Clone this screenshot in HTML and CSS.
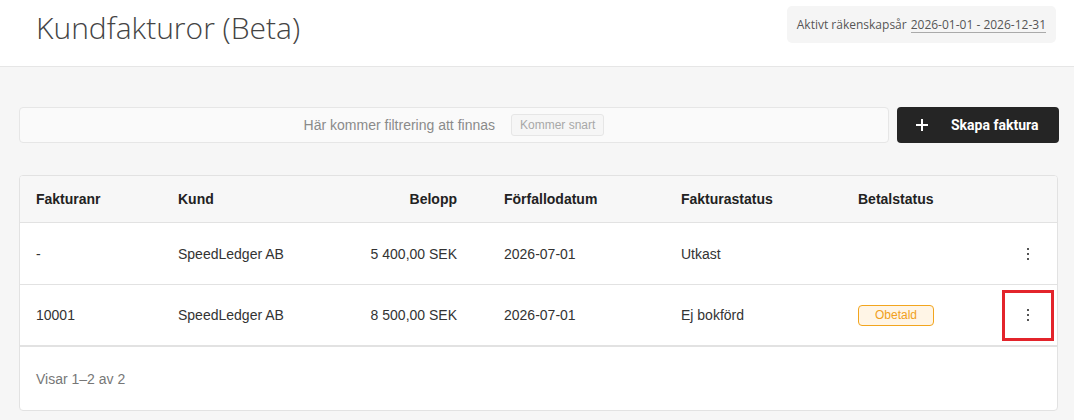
FILE: index.html
```html
<!DOCTYPE html>
<html lang="sv">
<head>
<meta charset="UTF-8">
<meta name="viewport" content="width=device-width, initial-scale=1.0">
<title>Kundfakturor (Beta)</title>
<link rel="stylesheet" href="styles.css">
</head>
<body>
  <header class="topbar">
    <h1>Kundfakturor (Beta)</h1>
    <div class="fiscal-year">Aktivt räkenskapsår <span class="fiscal-dates">2026-01-01 - 2026-12-31</span></div>
  </header>

  <main class="content">
    <div class="toolbar">
      <div class="filter-bar">
        <span class="filter-text">Här kommer filtrering att finnas</span>
        <span class="soon-tag">Kommer snart</span>
      </div>
      <button class="create-btn">
        <svg width="12" height="12" viewBox="0 0 12 12"><path d="M6 0v12M0 6h12" stroke="#fff" stroke-width="2"/></svg>
        <span>Skapa faktura</span>
      </button>
    </div>

    <div class="card">
      <table class="invoices">
        <colgroup>
          <col style="width: 142px">
          <col style="width: 168px">
          <col style="width: 158px">
          <col style="width: 177px">
          <col style="width: 177px">
          <col style="width: 158px">
          <col>
        </colgroup>
        <thead>
          <tr>
            <th>Fakturanr</th>
            <th>Kund</th>
            <th class="amount">Belopp</th>
            <th>Förfallodatum</th>
            <th>Fakturastatus</th>
            <th>Betalstatus</th>
            <th></th>
          </tr>
        </thead>
        <tbody>
          <tr>
            <td>-</td>
            <td>SpeedLedger AB</td>
            <td class="amount">5 400,00 SEK</td>
            <td>2026-07-01</td>
            <td>Utkast</td>
            <td></td>
            <td class="actions"><button class="menu-btn"><i></i><i></i><i></i></button></td>
          </tr>
          <tr class="last-row">
            <td>10001</td>
            <td>SpeedLedger AB</td>
            <td class="amount">8 500,00 SEK</td>
            <td>2026-07-01</td>
            <td>Ej bokförd</td>
            <td><span class="pay-badge">Obetald</span></td>
            <td class="actions"><button class="menu-btn marked"><i></i><i></i><i></i></button></td>
          </tr>
        </tbody>
      </table>
      <div class="card-footer">Visar 1–2 av 2</div>
    </div>
  </main>
</body>
</html>
```

FILE: styles.css
```css
body {
  margin: 0;
  background-color: #f6f6f6;
  font-family: "Liberation Sans", Arial, sans-serif;
  color: #333333;
}
.topbar {
  background-color: #ffffff;
  border-bottom: 1px solid #e6e6e6;
  height: 66px;
  display: flex;
  justify-content: space-between;
  align-items: flex-start;
  padding: 0 18px 0 36px;
}
.topbar h1 {
  margin: 7px 0 0;
  font-family: "Open Sans", sans-serif;
  font-weight: 300;
  font-size: 30px;
  color: #444444;
}
.fiscal-year {
  margin-top: 6px;
  background-color: #f5f5f5;
  border-radius: 5px;
  padding: 0 10px;
  height: 37px;
  display: flex;
  align-items: center;
  gap: 4px;
  font-family: "Open Sans", sans-serif;
  font-size: 12px;
  color: #555555;
}
.fiscal-dates {
  border-bottom: 1px solid #aaaaaa;
  line-height: 15px;
}
.content {
  padding: 40px 15px 0 19px;
}
.toolbar {
  display: flex;
  gap: 8px;
  height: 36px;
}
.filter-bar {
  flex: 1;
  background-color: #fafafa;
  border: 1px solid #e6e6e6;
  border-radius: 4px;
  display: flex;
  justify-content: center;
  align-items: center;
  gap: 16px;
}
.filter-text {
  font-size: 14px;
  color: #8a8a8a;
}
.soon-tag {
  font-size: 12px;
  color: #a8a8a8;
  background-color: #f6f6f6;
  border: 1px solid #e6e6e6;
  border-radius: 3px;
  padding: 3px 8px;
}
.create-btn {
  width: 162px;
  background-color: #252525;
  color: #ffffff;
  border: none;
  border-radius: 4px;
  display: flex;
  align-items: center;
  gap: 23px;
  padding: 0 0 0 19px;
  font-family: Roboto, sans-serif;
  font-weight: 700;
  font-size: 14px;
  cursor: pointer;
}
.card {
  margin: 32px 1px 0 0;
  background-color: #ffffff;
  border: 1px solid #e2e2e2;
  border-radius: 4px;
  overflow: hidden;
}
.invoices {
  width: 100%;
  border-collapse: collapse;
  table-layout: fixed;
  font-size: 14px;
}
.invoices th {
  background-color: #f7f7f7;
  color: #222222;
  font-weight: 700;
  text-align: left;
  height: 46px;
  padding: 0 16px;
  border-bottom: 1px solid #e2e2e2;
}
.invoices td {
  height: 61px;
  padding: 0 16px;
  border-bottom: 1px solid #e2e2e2;
}
.invoices .last-row td {
  height: 60px;
  border-bottom: 2px solid #e2e2e2;
}
.invoices .amount {
  text-align: right;
  padding-right: 31px;
}
.invoices .actions {
  padding: 0;
}
.pay-badge {
  display: inline-block;
  width: 74px;
  text-align: center;
  font-size: 12px;
  line-height: 19px;
  color: #f0a020;
  background-color: #fff5e6;
  border: 1px solid #f2a51e;
  border-radius: 4px;
}
.menu-btn {
  display: flex;
  flex-direction: column;
  align-items: center;
  justify-content: center;
  gap: 3px;
  width: 52px;
  height: 51px;
  margin-left: 2px;
  background: none;
  border: 3px solid transparent;
  cursor: pointer;
}
.menu-btn i {
  width: 2px;
  height: 2px;
  background-color: #555555;
}
.menu-btn.marked {
  border-color: #e3242b;
}
.card-footer {
  height: 63px;
  display: flex;
  align-items: center;
  padding-left: 16px;
  font-size: 14px;
  color: #777777;
}
```
